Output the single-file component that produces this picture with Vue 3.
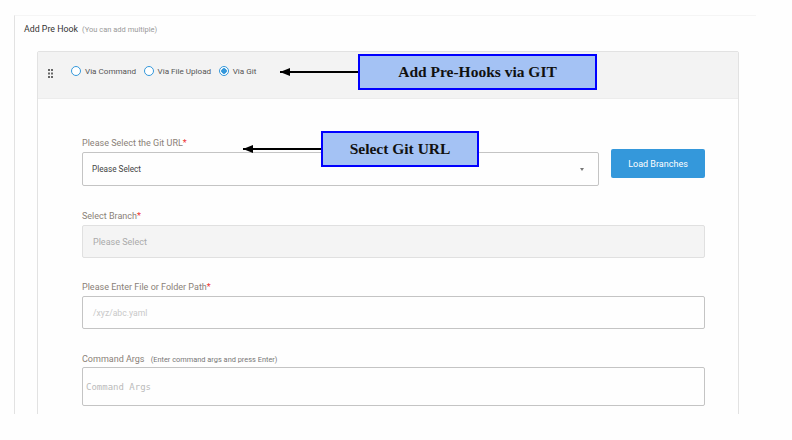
<template>
  <div class="page">
    <div class="panel">
      <div class="title">
        Add Pre Hook
        <span class="hint">(You can add multiple)</span>
      </div>

      <div class="card">
        <div class="card-head">
          <svg class="grip" width="5" height="9" viewBox="0 0 5 9">
            <rect v-for="dot in gripDots" :key="dot.x + '-' + dot.y" :x="dot.x" :y="dot.y" width="2" height="2" fill="#666" />
          </svg>
          <label v-for="opt in sources" :key="opt" class="radio">
            <span class="circle" :class="{ on: opt === selected }" @click="selected = opt"></span>
            {{ opt }}
          </label>
        </div>

        <div class="card-body">
          <div class="git-row">
            <div class="git-field">
              <div class="label">Please Select the Git URL<span class="req">*</span></div>
              <div class="select">
                <span>Please Select</span>
                <span class="caret"></span>
              </div>
            </div>
            <button class="load">Load Branches</button>
          </div>

          <div class="field branch">
            <div class="label">Select Branch<span class="req">*</span></div>
            <div class="input disabled">Please Select</div>
          </div>

          <div class="field path">
            <div class="label">Please Enter File or Folder Path<span class="req">*</span></div>
            <div class="input placeholder">/xyz/abc.yaml</div>
          </div>

          <div class="field args">
            <div class="label">Command Args <span class="hint-small">(Enter command args and press Enter)</span></div>
            <div class="input mono">Command Args</div>
          </div>
        </div>
      </div>
    </div>

    <!-- annotations on top of the screenshot -->
    <div class="callout first">Add Pre-Hooks via GIT</div>
    <div class="arrow first"></div>
    <div class="callout second">Select Git URL</div>
    <div class="arrow second"></div>
  </div>
</template>

<script setup>
import { ref } from 'vue';

const sources = ['Via Command', 'Via File Upload', 'Via Git'];
const selected = ref('Via Git');

const gripDots = [];
for (const y of [0, 3.5, 7]) {
  for (const x of [0, 3]) gripDots.push({ x, y });
}
</script>

<style>
html, body {
  margin: 0;
  background: #fefefe;
}
</style>

<style scoped>
.page {
  position: relative;
  width: 792px;
  height: 440px;
  overflow: hidden;
  padding-top: 15px;
  box-sizing: border-box;
  background: #fefefe;
  font-family: Roboto, "Liberation Sans", sans-serif;
}

.panel {
  margin-left: 14px;
  width: 742px;
  height: 399px;
  box-sizing: border-box;
  overflow: hidden;
  border-left: 1px solid #e2e2e2;
  border-top: 1px solid #f5f5f5;
  padding: 7px 0 0 9px;
}

.title {
  font-size: 8.8px;
  line-height: 12px;
  color: #333;
}

.hint {
  font-size: 7.5px;
  color: #999;
  margin-left: 2px;
}

.card {
  margin: 15px 0 0 13px;
  width: 702px;
  box-sizing: border-box;
  border: 1px solid #e2e2e2;
  border-radius: 2px;
}

.card-head {
  display: flex;
  align-items: center;
  height: 47px;
  box-sizing: border-box;
  padding: 0 0 9px 10px;
  background: #f3f3f3;
  border-bottom: 1px solid #ececec;
}

.grip {
  margin-right: 18px;
  margin-top: 5px;
}

.radio {
  display: flex;
  align-items: center;
  gap: 4px;
  margin-right: 7.5px;
  font-size: 8.1px;
  color: #555;
}

.circle {
  width: 8px;
  height: 8px;
  box-sizing: content-box;
  border: 1px solid #3498db;
  border-radius: 50%;
  background: #fff;
}

.circle.on {
  background: radial-gradient(circle, #3498db 0, #3498db 2.5px, #fff 3px);
}

.card-body {
  padding: 38px 33px 40px 44px;
}

.git-row {
  display: flex;
  align-items: flex-start;
  gap: 12px;
}

.git-field {
  width: 517px;
}

.label {
  font-size: 9px;
  line-height: 12px;
  color: #8a8178;
  margin-bottom: 3px;
}

.req {
  color: #e33;
}

.select {
  height: 34px;
  box-sizing: border-box;
  display: flex;
  align-items: center;
  justify-content: space-between;
  padding: 0 14px 0 9px;
  border: 1px solid #c4c4c4;
  border-radius: 2px;
  font-size: 8.2px;
  color: #444;
}

.caret {
  width: 0;
  height: 0;
  border-left: 2.5px solid transparent;
  border-right: 2.5px solid transparent;
  border-top: 3px solid #777;
}

.load {
  margin-top: 12px;
  width: 94px;
  height: 29px;
  border: 0;
  border-radius: 2px;
  background: #3498db;
  color: #fff;
  font-family: inherit;
  font-size: 9px;
}

.field .input {
  box-sizing: border-box;
  display: flex;
  align-items: center;
  padding: 0 10px;
  border: 1px solid #c4c4c4;
  border-radius: 2px;
  font-size: 9px;
}

.branch {
  margin-top: 24px;
}

.branch .input {
  height: 33px;
}

.path {
  margin-top: 23px;
}

.path .input {
  height: 33px;
  font-size: 8.6px;
}

.args {
  margin-top: 24px;
}

.args .label {
  margin-bottom: 1px;
}

.args .input {
  height: 39px;
}

.disabled {
  background: #f4f4f4;
  border-color: #e0e0e0 !important;
  color: #aaa;
}

.placeholder {
  color: #c8c8c8;
}

.mono {
  padding: 0 3px !important;
  font-family: "DejaVu Sans Mono", "Liberation Mono", monospace;
  font-size: 9px !important;
  color: #bbb;
}

.hint-small {
  font-size: 7.4px;
  color: #777;
  margin-left: 4px;
}

.callout {
  position: absolute;
  box-sizing: border-box;
  display: flex;
  align-items: center;
  justify-content: center;
  height: 36px;
  background: #a4c2f4;
  border: 2px solid #0000ff;
  color: #111;
  font-family: "Liberation Serif", serif;
  font-weight: bold;
  font-size: 15.5px;
}

.callout.first {
  left: 358px;
  top: 54px;
  width: 239px;
}

.callout.second {
  left: 321px;
  top: 131px;
  width: 158px;
}

.arrow {
  position: absolute;
  height: 2px;
  background: #000;
}

.arrow::before {
  content: "";
  position: absolute;
  left: 0;
  top: -3px;
  border-top: 4px solid transparent;
  border-bottom: 4px solid transparent;
  border-right: 10px solid #000;
}

.arrow.first {
  left: 280px;
  top: 71px;
  width: 78px;
}

.arrow.second {
  left: 243px;
  top: 148px;
  width: 78px;
}
</style>
